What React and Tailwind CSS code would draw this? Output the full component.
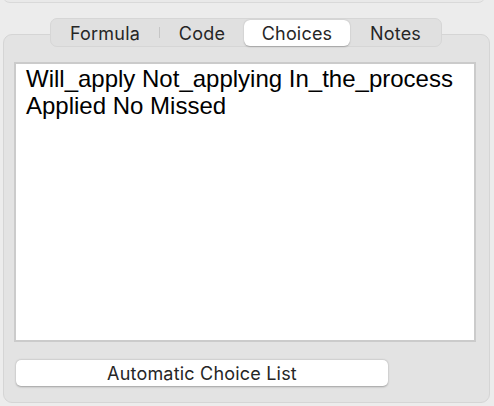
export default function App() {
  const ui = { fontFamily: 'Inter, "Liberation Sans", sans-serif' };
  return (
    <div className="w-[494px] h-[406px] bg-[#ececec] overflow-hidden flex flex-col" style={ui}>
      <div className="ml-[2px] w-[484px] h-[20px] -mt-[17px] shrink-0 rounded-b-[8px] border border-[#d9d9d9] bg-[#e9e9e9]" />
      <div className="relative z-10 mt-[15px] ml-[50px] w-[392px] h-[29px] shrink-0 flex items-center rounded-[7px] border border-[#d6d6d6] bg-[#e0e0e0] text-[18px] tracking-[0.2px] text-[#262626]">
        <div className="w-[108px] h-full flex items-center justify-center pt-[2px]">Formula</div>
        <div className="w-px h-[11px] bg-[#c6c6c6]" />
        <div className="w-[84px] h-full flex items-center justify-center pt-[2px]">Code</div>
        <div className="w-[106px] h-[26px] flex items-center justify-center pt-[2px] rounded-[6px] bg-white shadow-[0_0.5px_1.5px_rgba(0,0,0,0.25)]">Choices</div>
        <div className="flex-1 h-full flex items-center justify-center pt-[2px]">Notes</div>
      </div>
      <div className="-mt-[13px] ml-[3px] w-[487px] h-[369px] shrink-0 rounded-[9px] border border-[#d5d5d5] bg-[#e3e3e3] flex flex-col">
        <div
          className="mt-[27px] ml-[10px] w-[462px] h-[280px] shrink-0 border-2 border-[#cbcbcb] bg-white pl-[10px] pt-[1px] text-[24px] leading-[27px] text-black"
          style={{ fontFamily: '"Liberation Sans", Arial, sans-serif' }}
        >
          Will_apply Not_applying In_the_process
          <br />
          Applied No Missed
        </div>
        <div className="mt-[18px] ml-[12px] w-[372px] h-[26px] shrink-0 rounded-[5px] bg-white shadow-[0_0.5px_2px_rgba(0,0,0,0.3)] flex items-center justify-center pt-[1px] text-[18px] tracking-[0.2px] text-[#262626]">
          Automatic Choice List
        </div>
      </div>
    </div>
  );
}
